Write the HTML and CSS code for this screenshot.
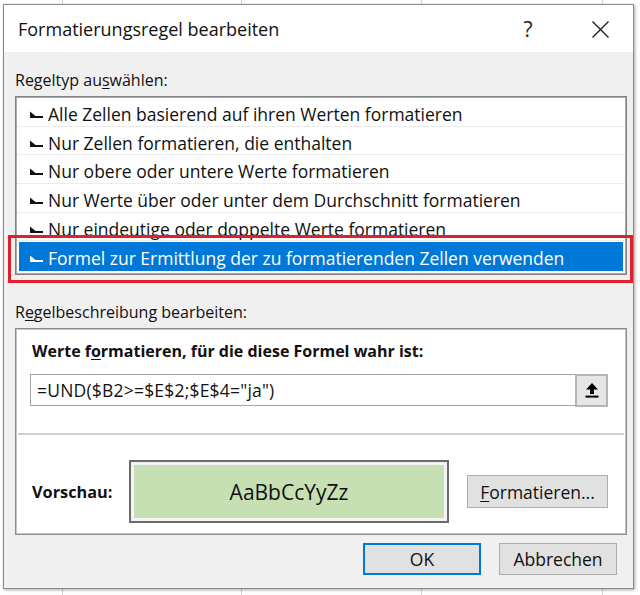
FILE: index.html
```html
<!DOCTYPE html>
<html lang="de">
<head>
<meta charset="utf-8">
<title>Formatierungsregel bearbeiten</title>
<link rel="stylesheet" href="styles.css">
</head>
<body>
<div class="screen">
  <div class="dialog">
    <div class="titlebar">
      <span class="title">Formatierungsregel bearbeiten</span>
      <span class="help">?</span>
      <span class="close">
        <svg width="17" height="17" viewBox="0 0 17 17"><path d="M0.5 0.5 L16.5 16.5 M16.5 0.5 L0.5 16.5" stroke="#1a1a1a" stroke-width="1.3" fill="none"/></svg>
      </span>
    </div>
    <div class="body">
      <div class="label">Regeltyp au<u>s</u>wählen:</div>
      <div class="listbox">
        <div class="row"><svg class="arrow" viewBox="0 0 13 8"><path d="M0 0.5 L0 7 L13 7 L13 5.1 L5.5 5.1 Z"/></svg>Alle Zellen basierend auf ihren Werten formatieren</div>
        <div class="row"><svg class="arrow" viewBox="0 0 13 8"><path d="M0 0.5 L0 7 L13 7 L13 5.1 L5.5 5.1 Z"/></svg>Nur Zellen formatieren, die enthalten</div>
        <div class="row"><svg class="arrow" viewBox="0 0 13 8"><path d="M0 0.5 L0 7 L13 7 L13 5.1 L5.5 5.1 Z"/></svg>Nur obere oder untere Werte formatieren</div>
        <div class="row"><svg class="arrow" viewBox="0 0 13 8"><path d="M0 0.5 L0 7 L13 7 L13 5.1 L5.5 5.1 Z"/></svg>Nur Werte über oder unter dem Durchschnitt formatieren</div>
        <div class="row"><svg class="arrow" viewBox="0 0 13 8"><path d="M0 0.5 L0 7 L13 7 L13 5.1 L5.5 5.1 Z"/></svg>Nur eindeutige oder doppelte Werte formatieren</div>
        <div class="row selected"><svg class="arrow" viewBox="0 0 13 8"><path d="M0 0.5 L0 7 L13 7 L13 5.1 L5.5 5.1 Z"/></svg>Formel zur Ermittlung der zu formatierenden Zellen verwenden</div>
      </div>
      <div class="label label-desc">R<u>e</u>gelbeschreibung bearbeiten:</div>
      <div class="descbox">
        <div class="desc-title">Werte f<u>o</u>rmatieren, für die diese Formel wahr ist:</div>
        <div class="formula">
          <span class="formula-text">=UND($B2&gt;=$E$2;$E$4="ja")</span>
          <span class="collapse">
            <svg width="14" height="16" viewBox="0 0 14 16"><path d="M7 1 L13 7.5 L9 7.5 L9 12 L5 12 L5 7.5 L1 7.5 Z" fill="#000"/><rect x="0.5" y="13.6" width="13" height="2" fill="#000"/></svg>
          </span>
        </div>
        <div class="sep"></div>
        <div class="preview-row">
          <span class="preview-label">Vorschau:</span>
          <div class="preview"><div class="sample">AaBbCcYyZz</div></div>
          <button class="btn btn-format"><u>F</u>ormatieren...</button>
        </div>
      </div>
      <div class="actions">
        <button class="btn btn-ok">OK</button>
        <button class="btn btn-cancel">Abbrechen</button>
      </div>
    </div>
  </div>
  <div class="highlight"></div>
</div>
</body>
</html>
```
FILE: styles.css
```css
* { box-sizing: border-box; }
html, body { margin: 0; padding: 0; }
body {
  width: 640px;
  height: 595px;
  overflow: hidden;
  font-family: "Open Sans", "Noto Sans", "DejaVu Sans", sans-serif;
  color: #000;
  background: #fff;
}
.screen {
  position: relative;
  width: 640px;
  height: 595px;
  padding: 4px 0 0 3px;
  background:
    linear-gradient(#d4d4d4, #d4d4d4) 62px 0 / 1px 100% no-repeat,
    linear-gradient(#d4d4d4, #d4d4d4) 241px 0 / 1px 100% no-repeat,
    linear-gradient(#d4d4d4, #d4d4d4) 421px 0 / 1px 100% no-repeat,
    linear-gradient(#d4d4d4, #d4d4d4) 602px 0 / 1px 100% no-repeat,
    #fff;
}
.dialog {
  width: 631px;
  height: 585px;
  border: 1px solid #8a8a8a;
  box-shadow: 1px 1px 3px rgba(0,0,0,0.35);
  background: #f0f0f0;
  display: flex;
  flex-direction: column;
}
.titlebar {
  height: 47px;
  flex: none;
  background: #fff;
  display: flex;
  align-items: center;
  padding: 1px 10px 0 14px;
}
.title {
  font-size: 18px;
  flex: 1;
  color: #111;
}
.help {
  width: 46px;
  text-align: center;
  font-size: 21px;
  color: #222;
  margin-right: 26px;
}
.close {
  width: 46px;
  display: flex;
  justify-content: center;
  align-items: center;
}
.body {
  flex: 1;
  display: flex;
  flex-direction: column;
  padding: 18px 6px 0 11px;
}
.label {
  font-size: 16px;
  line-height: 20px;
  height: 20px;
  color: #111;
}
.label u { text-decoration-thickness: 1px; text-underline-offset: 2px; }
.listbox {
  margin-top: 6px;
  background: #fff;
  border: 1px solid #828282;
  box-shadow: inset 0 0 0 1px #a9a9a9;
  padding: 1px 1px 2px 1px;
  height: 179px;
}
.row {
  height: 28.7px;
  line-height: 24px;
  padding: 4px 0 0 13px;
  font-size: 17.5px;
  color: #111;
  border-bottom: 1px solid #ececec;
  display: flex;
  align-items: center;
  white-space: nowrap;
  overflow: hidden;
}
.row .arrow {
  width: 13px;
  height: 8px;
  margin: 2px 5px 0 0;
  fill: #111;
  flex: none;
}
.row.selected {
  height: 29px;
  margin: 1px 2px 0 2px;
  padding: 2px 0 0 11px;
  background: #0078d7;
  color: #fff;
  border-bottom: none;
}
.row.selected .arrow { fill: #fff; }
.label-desc {
  margin-top: 27px;
}
.descbox {
  margin-top: 6px;
  background: #fff;
  border: 1px solid #8c8c8c;
  box-shadow: inset 0 0 0 1px #c4c4c4;
  height: 207px;
  padding: 12px 2px 0 2px;
  display: flex;
  flex-direction: column;
}
.desc-title {
  font-size: 16px;
  font-weight: bold;
  line-height: 20px;
  margin-left: 14px;
  color: #111;
}
.desc-title u { text-decoration-thickness: 1px; text-underline-offset: 2px; }
.formula {
  margin: 13px 16px 0 12px;
  height: 32px;
  border: 1px solid #a5a5a5;
  display: flex;
  align-items: center;
  background: #fff;
}
.formula-text {
  flex: 1;
  padding-left: 6px;
  font-size: 17.5px;
  color: #111;
  letter-spacing: 0.2px;
}
.collapse {
  width: 33px;
  height: 33px;
  margin: -1px -1px -1px 0;
  background: #e6e6e6;
  border: 2px solid #b4b4b4;
  display: flex;
  align-items: center;
  justify-content: center;
}
.sep {
  margin-top: 27px;
  height: 2px;
  background: #cfcfcf;
}
.preview-row {
  margin-top: 25px;
  display: flex;
  align-items: center;
  padding-left: 14px;
}
.preview-label {
  width: 97px;
  font-size: 16.3px;
  font-weight: bold;
  color: #111;
}
.preview {
  width: 320px;
  height: 63px;
  border: 2px solid #6b6b6b;
  padding: 3px;
  background: #f4f4f4;
}
.sample {
  height: 100%;
  background: #c6e0b4;
  display: flex;
  align-items: center;
  justify-content: center;
  font-size: 21px;
  color: #111;
}
.btn {
  font-family: inherit;
  font-size: 17.5px;
  color: #111;
  background: #e1e1e1;
  border: 1px solid #adadad;
  padding: 0;
  margin: 0;
}
.btn u { text-decoration-thickness: 1px; text-underline-offset: 2px; }
.btn-format {
  margin-left: 18px;
  width: 141px;
  height: 33px;
}
.actions {
  margin-top: 8px;
  display: flex;
  justify-content: flex-end;
  gap: 18px;
  padding-right: 10px;
}
.btn-ok, .btn-cancel {
  width: 118px;
  height: 32px;
}
.btn-ok {
  border: 2px solid #0078d7;
}
.highlight {
  position: absolute;
  left: 8px;
  top: 235px;
  width: 625px;
  height: 48px;
  border: 3px solid #e0202b;
  pointer-events: none;
}
```
